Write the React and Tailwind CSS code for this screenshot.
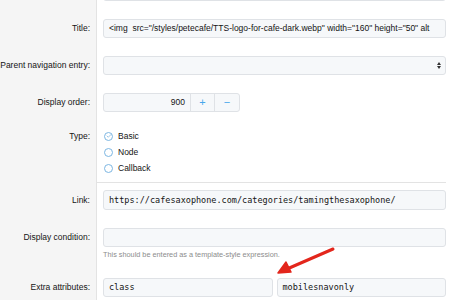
import { Check } from 'lucide-react'

const font = { fontFamily: '"Liberation Sans", Arial, sans-serif' }

function Row({ label, children, pt = 'pt-[9px]', pb = 'pb-[9px]', labelH = 'h-[19px]', divider = false }) {
  return (
    <div className="flex">
      <div className={`w-[97px] shrink-0 bg-[#f5f5f5] border-r border-[#e3e3e3] pr-[6px] ${pt}`}>
        <div className={`${labelH} flex items-center justify-end text-[8.5px] text-[#141414] whitespace-nowrap`}>{label}</div>
      </div>
      <div className="flex-1 pr-[5px]">
        <div className={`pl-[6px] ${pt} ${pb} ${divider ? 'border-b border-[#e3e3e3]' : ''}`}>{children}</div>
      </div>
    </div>
  )
}

function Box({ children, mono = false, className = '' }) {
  return (
    <div
      className={`h-[19px] flex items-center px-[5px] bg-[#f6f8fa] border border-[#dfe2e6] rounded-[3px] text-[8.5px] text-[#141414] whitespace-pre overflow-hidden ${className}`}
      style={mono ? { fontFamily: '"DejaVu Sans Mono", "Liberation Mono", monospace' } : undefined}
    >
      {children}
    </div>
  )
}

function Radio({ label, checked }) {
  return (
    <div className="h-[16px] flex items-center gap-[5px] pl-[1px]">
      <span className="w-[9px] h-[9px] rounded-full border border-[#7cb6e2] bg-white flex items-center justify-center">
        {checked && <Check size={6} strokeWidth={3} className="text-[#7cb6e2]" />}
      </span>
      <span className="text-[8.5px] text-[#141414]">{label}</span>
    </div>
  )
}

export default function App() {
  return (
    <div className="relative w-[451px] h-[300px] overflow-hidden bg-white" style={font}>
      <div className="-mt-[27px]">
        <Row label="">
          <Box> </Box>
        </Row>
        <Row label="Title:">
          <Box>{'<img  src="/styles/petecafe/TTS-logo-for-cafe-dark.webp" width="160" height="50" alt'}</Box>
        </Row>
        <Row label="Parent navigation entry:">
          <Box className="justify-end">
            <svg width="4" height="7" viewBox="0 0 4 7" className="mr-[-1px]">
              <path d="M0 3 L2 0 L4 3 Z" fill="#333" />
              <path d="M0 4 L2 7 L4 4 Z" fill="#333" />
            </svg>
          </Box>
        </Row>
        <Row label="Display order:">
          <div className="w-[137px] h-[19px] flex bg-[#f6f8fa] border border-[#dfe2e6] rounded-[3px] text-[8.5px] text-[#141414]">
            <div className="flex-1 flex items-center justify-end pr-[5px]">900</div>
            <div className="w-[24px] flex items-center justify-center border-l border-[#dfe2e6] text-[#47a7eb] text-[11px]">+</div>
            <div className="w-[25px] flex items-center justify-center border-l border-[#dfe2e6] text-[#47a7eb] text-[11px]">−</div>
          </div>
        </Row>
        <Row label="Type:" pt="pt-[7px]" pb="pb-[6px]" labelH="h-[16px]" divider>
          <Radio label="Basic" checked />
          <Radio label="Node" />
          <Radio label="Callback" />
        </Row>
        <Row label="Link:" pt="pt-[7px]" labelH="h-[20px]">
          <Box mono className="h-[20px]">https://cafesaxophone.com/categories/tamingthesaxophone/</Box>
        </Row>
        <Row label="Display condition:">
          <Box> </Box>
          <div className="mt-[3px] h-[10px] flex items-center text-[7.3px] text-[#8c8c8c] whitespace-nowrap">
            This should be entered as a template-style expression.
          </div>
        </Row>
        <Row label="Extra attributes:">
          <div className="grid grid-cols-2 gap-[4px]">
            <Box mono>class</Box>
            <Box mono>mobilesnavonly</Box>
          </div>
        </Row>
      </div>
      <svg className="absolute left-0 top-0 pointer-events-none" width="451" height="300">
        <line x1="333" y1="249" x2="287" y2="269" stroke="#e3261c" strokeWidth="3" strokeLinecap="round" />
        <path d="M278 273 L286 262 L291 272 Z" fill="#e3261c" stroke="#e3261c" strokeWidth="1.5" strokeLinejoin="round" />
      </svg>
    </div>
  )
}
